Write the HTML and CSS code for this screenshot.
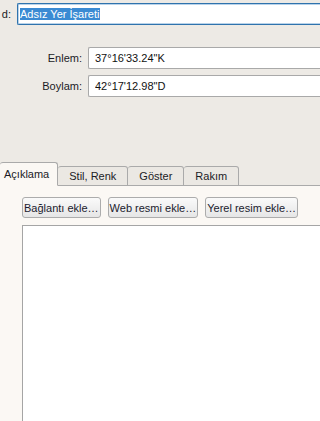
FILE: index.html
```html
<!DOCTYPE html>
<html lang="tr">
<head>
<meta charset="UTF-8" />
<title>Yer İşareti Özellikleri</title>
<link rel="stylesheet" href="styles.css">
</head>
<body>
  <div class="window">
    <div class="name-row">
      <label for="name">d:</label>
      <input type="text" id="name" class="field focused" value="Adsız Yer İşareti" />
    </div>

    <div class="coords">
      <div class="coord-row">
        <label for="lat">Enlem:</label>
        <input type="text" id="lat" class="field" value="37°16'33.24&quot;K" />
      </div>
      <div class="coord-row">
        <label for="lon">Boylam:</label>
        <input type="text" id="lon" class="field" value="42°17'12.98&quot;D" />
      </div>
    </div>

    <div class="tabs">
      <div class="tab active">Açıklama</div>
      <div class="tab">Stil, Renk</div>
      <div class="tab">Göster</div>
      <div class="tab">Rakım</div>
      <div class="tab-rest"></div>
    </div>
    <div class="pane">
      <div class="toolbar">
        <button type="button">Bağlantı ekle…</button>
        <button type="button">Web resmi ekle…</button>
        <button type="button">Yerel resim ekle…</button>
      </div>
      <textarea class="desc"></textarea>
    </div>
  </div>
<script>
  // keep the name selected like in the dialog
  var nameInput = document.getElementById('name');
  nameInput.focus({ preventScroll: true });
  nameInput.select();
</script>
</body>
</html>
```

FILE: styles.css
```css
*, *::before, *::after {
  box-sizing: border-box;
}
html, body {
  margin: 0;
  padding: 0;
  height: 100%;
  overflow: hidden;
}
body {
  background: #edeae5;
  font-family: 'Liberation Sans', Arial, sans-serif;
  font-size: 11px;
  color: #1b1b26;
}
.window {
  width: 320px;
  height: 100%;
  display: flex;
  flex-direction: column;
}
label {
  flex-shrink: 0;
}
/* fields run past the right edge of the dialog, so no right border */
.field {
  font-family: inherit;
  font-size: 11px;
  color: #111;
  height: 22px;
  min-width: 0;
  padding: 0 6px;
  border: 1px solid #a9a9a9;
  border-right: none;
  border-radius: 2px 0 0 2px;
  background: #fff;
  outline: none;
}
.name-row {
  display: flex;
  align-items: center;
  gap: 6px;
  padding-top: 3px;
}
.name-row label {
  width: 11px;
  text-align: right;
}
.name-row .field {
  flex: 1;
  padding-left: 2px;
  border-color: #2f73ad;
  box-shadow: inset 0 1px 0 #b9d3ea, inset 0 -1px 0 #b9d3ea, inset 1px 0 0 #b9d3ea;
}
.field.focused::selection {
  background: #3a8ad3;
  color: #fff;
}
.coords {
  display: flex;
  flex-direction: column;
  gap: 6px;
  margin-top: 22px;
}
.coord-row {
  display: flex;
  align-items: center;
  gap: 6px;
}
.coord-row label {
  width: 82px;
  text-align: right;
}
.coord-row .field {
  flex: 1;
}
.tabs {
  display: flex;
  align-items: flex-end;
  margin-top: 65px;
  height: 24px;
}
.tab {
  height: 20px;
  padding: 0 11px;
  display: flex;
  align-items: center;
  background: #ebe8e3;
  border: 1px solid #aaa;
  border-left: none;
  border-radius: 3px 3px 0 0;
}
.tab.active {
  height: 24px;
  background: #fbf8f4;
  border-bottom-color: #fbf8f4;
  padding: 0 8px 0 4px;
}
.tab-rest {
  flex: 1;
  border-bottom: 1px solid #aaa;
}
.pane {
  flex: 1;
  background: #fbf8f4;
  padding: 11px 0 0 22px;
  display: flex;
  flex-direction: column;
  gap: 7px;
}
.toolbar {
  display: flex;
  gap: 7px;
}
.toolbar button {
  font-family: inherit;
  font-size: 11px;
  color: #1b1b2e;
  height: 21px;
  padding: 0 1px;
  border: 1px solid #acacac;
  border-radius: 3px;
  background: linear-gradient(#fafafa, #e6e6e6);
}
.desc {
  flex: 1;
  border: 1px solid #a5a5a5;
  border-right: none;
  border-bottom: none;
  background: #fff;
  resize: none;
  outline: none;
}
```
